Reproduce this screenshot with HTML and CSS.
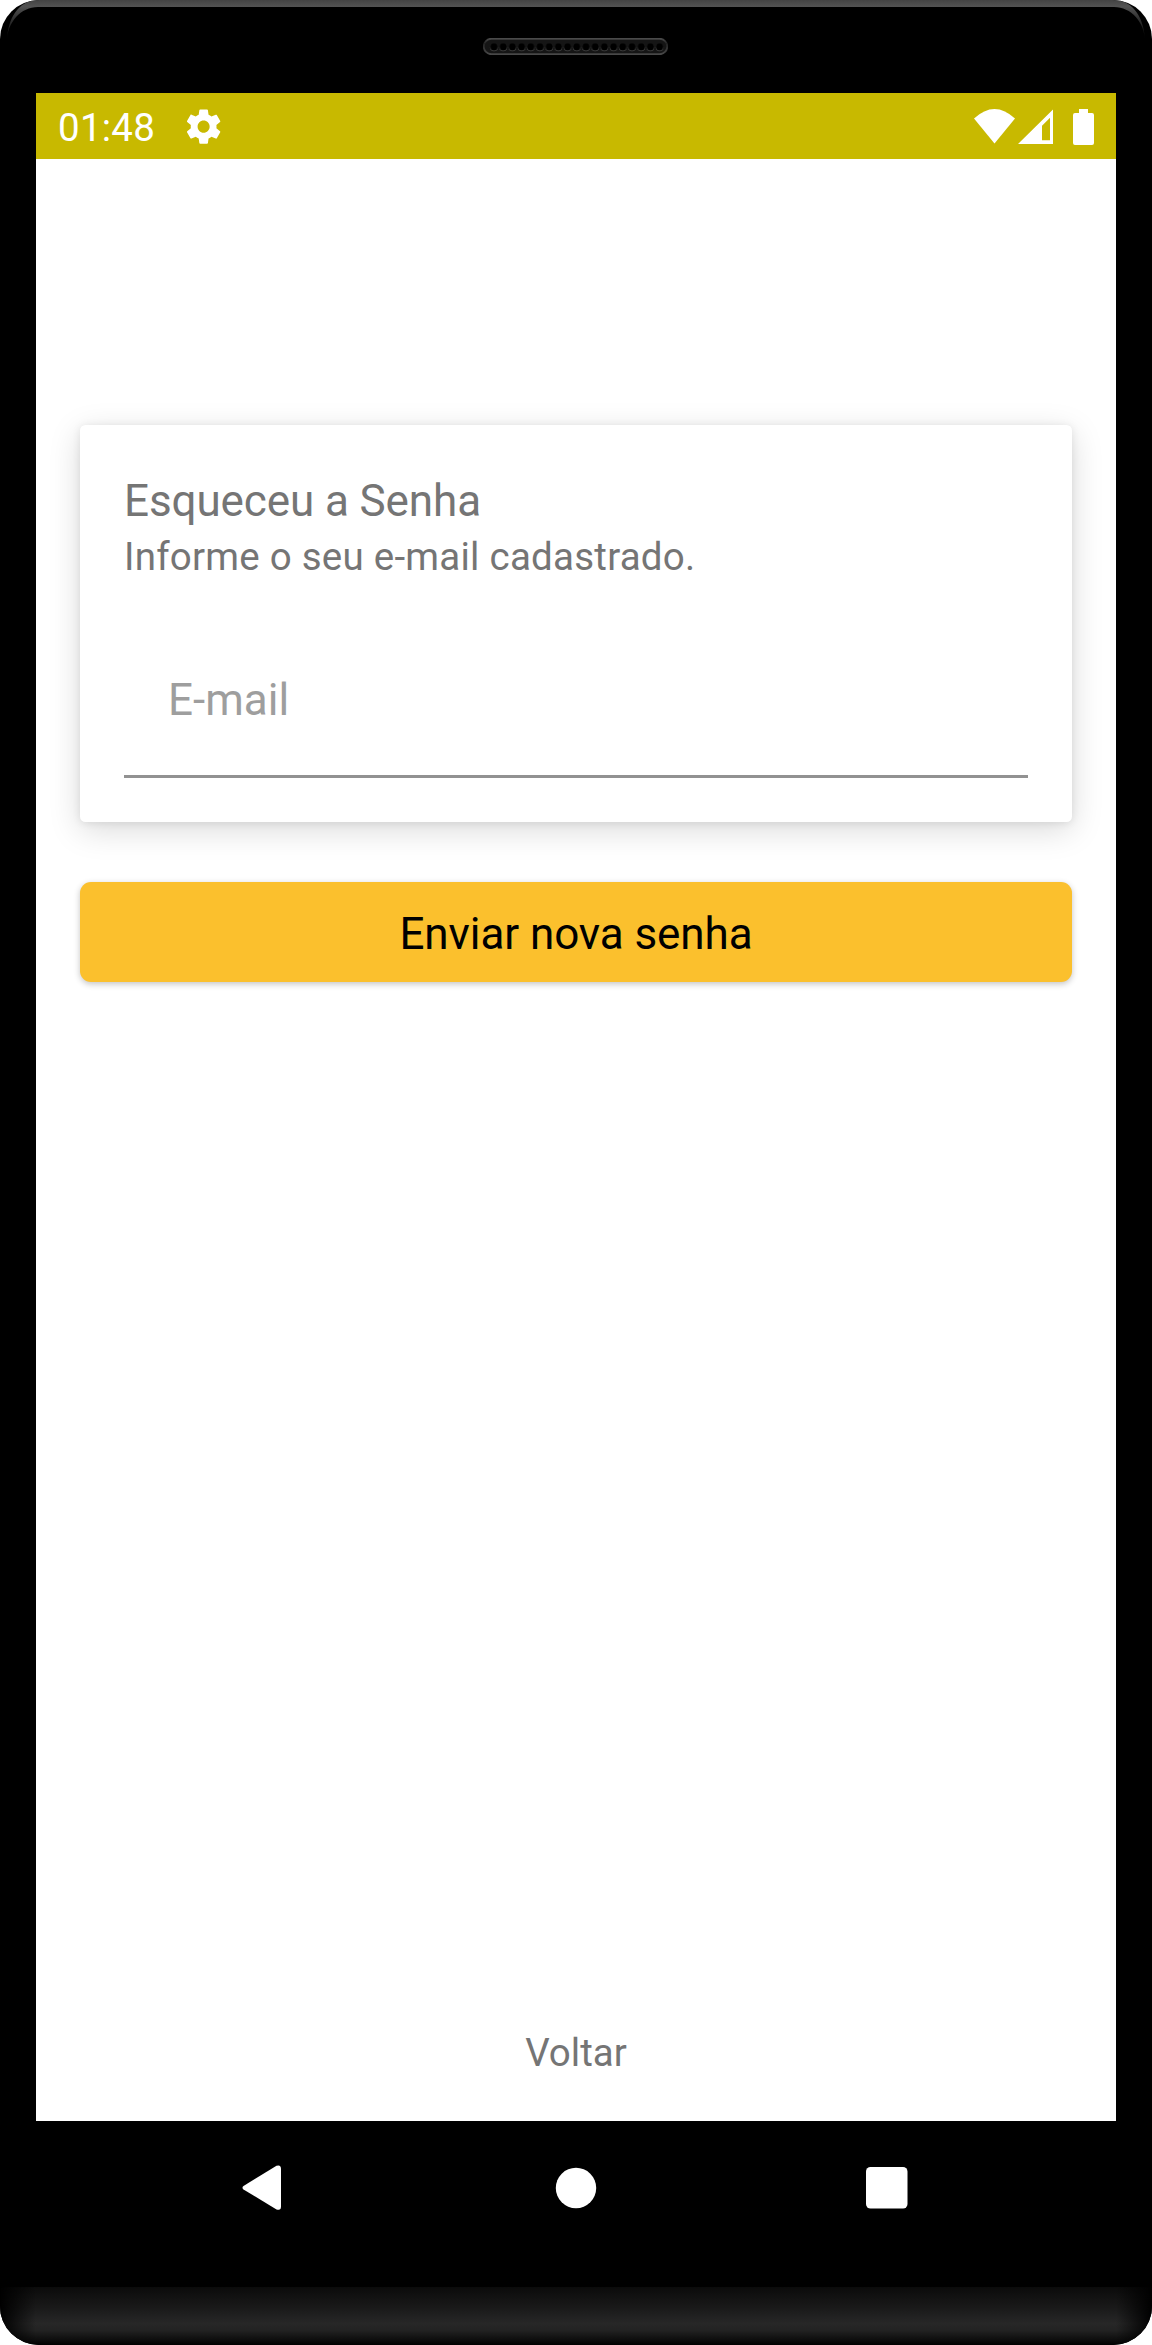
FILE: index.html
```html
<!DOCTYPE html>
<html lang="pt-BR">
<head>
<meta charset="utf-8">
<title>Esqueceu a Senha</title>
<link rel="stylesheet" href="styles.css">
</head>
<body>
<div class="device">
  <div class="bezel-top">
    <svg class="rim" width="1152" height="44" viewBox="0 0 1152 44" aria-hidden="true">
      <defs>
        <linearGradient id="rim" gradientUnits="userSpaceOnUse" x1="0" y1="0" x2="0" y2="42">
          <stop offset="0" stop-color="#434343"/>
          <stop offset=".15" stop-color="#525252"/>
          <stop offset=".45" stop-color="#303030"/>
          <stop offset="1" stop-color="#000"/>
        </linearGradient>
      </defs>
      <path fill="url(#rim)" d="M7 42C7 20 18 0 38 0H1114C1134 0 1145 20 1145 42C1145 22 1131 7 1114 7H38C21 7 7 22 7 42Z"/>
    </svg>
    <svg class="speaker" width="185" height="17" viewBox="0 0 185 17" aria-hidden="true">
      <defs>
        <linearGradient id="spk" x1="0" y1="0" x2="0" y2="1">
          <stop offset="0" stop-color="#4a4a4a"/>
          <stop offset=".3" stop-color="#222"/>
          <stop offset="1" stop-color="#484848"/>
        </linearGradient>
        <pattern id="holes" patternUnits="userSpaceOnUse" x="6.4" y="0" width="9.2" height="17">
          <circle cx="4.6" cy="9.5" r="3.8" fill="#484848"/>
          <circle cx="4.6" cy="8.8" r="3.6" fill="#000"/>
        </pattern>
      </defs>
      <rect x=".75" y=".75" width="183.5" height="15.5" rx="7.75" fill="#151515" stroke="url(#spk)" stroke-width="1.8"/>
      <rect x="6.4" y="0" width="174.8" height="17" fill="url(#holes)"/>
    </svg>
  </div>
  <main class="screen">
    <header class="status">
      <span class="clock">01:48</span>
      <svg class="gear" width="41.25" height="41.25" viewBox="0 0 24 24" fill="#fff"><path d="M19.43 12.98c.04-.32.07-.64.07-.98s-.03-.66-.07-.98l2.11-1.65c.19-.15.24-.42.12-.64l-2-3.46c-.12-.22-.39-.3-.61-.22l-2.49 1c-.52-.4-1.08-.73-1.69-.98l-.38-2.65C14.46 2.18 14.25 2 14 2h-4c-.25 0-.46.18-.49.42l-.38 2.65c-.61.25-1.17.59-1.69.98l-2.49-1c-.23-.09-.49 0-.61.22l-2 3.46c-.13.22-.07.49.12.64l2.11 1.65c-.04.32-.07.65-.07.98s.03.66.07.98l-2.11 1.65c-.19.15-.24.42-.12.64l2 3.46c.12.22.39.3.61.22l2.49-1c.52.4 1.08.73 1.69.98l.38 2.65c.03.24.24.42.49.42h4c.25 0 .46-.18.49-.42l.38-2.65c.61-.25 1.17-.59 1.69-.98l2.49 1c.23.09.49 0 .61-.22l2-3.46c.12-.22.07-.49-.12-.64l-2.11-1.65zM12 15.500c-1.930 0-3.500-1.570-3.500-3.500s1.570-3.500 3.500-3.500 3.500 1.570 3.500 3.500-1.570 3.500-3.500 3.500z"/></svg>
      <svg class="wifi" width="41" height="36" viewBox="0 0 41 36" fill="#fff"><path d="M0 9.500Q20.500-9.500 41 9.500L20.500 34.500Z"/></svg>
      <svg class="signal" width="35" height="36" viewBox="0 0 35 36" fill="#fff"><path fill-rule="evenodd" d="M35 .5V35H0ZM32 8.700L24 16.700V31.300H32Z"/></svg>
      <svg class="battery" width="21" height="36" viewBox="0 0 21 36" fill="#fff"><path d="M6 0H15V4H19Q21 4 21 6V34Q21 36 19 36H2Q0 36 0 34V6Q0 4 2 4H6Z"/></svg>
    </header>
    <section class="card">
      <h1 class="title">Esqueceu a Senha</h1>
      <p class="hint">Informe o seu e-mail cadastrado.</p>
      <input class="field" type="email" placeholder="E-mail" aria-label="E-mail">
    </section>
    <button class="submit" type="button">Enviar nova senha</button>
    <a class="back">Voltar</a>
  </main>
  <nav class="navbar">
    <svg width="40" height="46" viewBox="0 0 40 46" fill="#fff"><path d="M1.500 21L34.500 .8Q39 -.8 39 4V41.500Q39 46 34.500 44.400L1.500 24.500Q-.5 22.700 1.500 21Z"/></svg>
    <svg class="home" width="42" height="42" viewBox="0 0 42 42" fill="#fff"><circle cx="21" cy="21" r="20.200"/></svg>
    <svg width="42" height="42" viewBox="0 0 42 42" fill="#fff"><rect width="41.500" height="41.500" rx="4.500"/></svg>
  </nav>
  <div class="chin"></div>
</div>
</body>
</html>
```
FILE: styles.css
```css
* { box-sizing: border-box; }
body { margin: 0; background: #fff; font-family: Roboto, sans-serif; }
.device {
  width: 1152px;
  height: 2345px;
  display: flex;
  flex-direction: column;
  background: #000;
  border-radius: 39px;
  overflow: hidden;
}
.bezel-top {
  position: relative;
  height: 93px;
  flex: none;
  display: flex;
  justify-content: center;
  padding: 38px 1px 0 0;
}
.rim { position: absolute; top: 0; left: 0; }
.speaker { display: block; }
.screen {
  width: 1080px;
  height: 2028px;
  flex: none;
  margin: 0 36px;
  background: #fff;
  display: flex;
  flex-direction: column;
}
.status {
  height: 66px;
  flex: none;
  background: #c8b900;
  display: flex;
  align-items: center;
  padding: 1px 22px 0;
}
.clock { color: #fff; font-size: 38.5px; line-height: 46px; padding-top: 2px; letter-spacing: .25px; }
.gear { margin-left: 28px; }
.wifi { margin-left: auto; }
.signal { margin-left: 3px; }
.battery { margin-left: 20px; }
.card {
  margin: 266px 44px 0;
  height: 397px;
  padding: 50px 44px 44px;
  background: #fff;
  border-radius: 5.5px;
  box-shadow: 0 8px 32px rgba(0, 0, 0, .15), 0 1px 9px rgba(0, 0, 0, .09);
  display: flex;
  flex-direction: column;
}
.title, .hint { margin: 0; font-weight: 400; color: #757575; }
.title { font-size: 44px; line-height: 52px; letter-spacing: -.1px; }
.hint { font-size: 38.5px; line-height: 46px; margin-top: 7px; letter-spacing: .24px; }
.field {
  margin-top: auto;
  height: 154px;
  width: 100%;
  padding: 0 44px;
  border: 0;
  border-bottom: 3px solid #929292;
  background: transparent;
  font: 400 44px/52px Roboto, sans-serif;
  outline: 0;
}
.field::placeholder { color: #9e9e9e; opacity: 1; }
.submit {
  margin: 60px 44px 0;
  height: 100px;
  flex: none;
  padding: 3px 0 0;
  border: 0;
  border-radius: 11px;
  background: #fbc02d;
  color: #000;
  font: 400 44px/52px Roboto, sans-serif;
  letter-spacing: -.08px;
  box-shadow: 0 2px 6px rgba(0, 0, 0, .24);
}
.back {
  margin: auto auto 45px;
  color: #757575;
  font-size: 38.5px;
  line-height: 46px;
}
.navbar {
  height: 132px;
  flex: none;
  display: flex;
  align-items: center;
  justify-content: space-between;
  padding: 1px 244px 0 242px;
}
.home { margin-left: 4px; }
.chin {
  margin-top: auto;
  height: 58px;
  background:
    linear-gradient(90deg, #000, transparent 36px calc(100% - 36px), #000),
    linear-gradient(#0b0b0b, #191919 35%, #272727 63%, #222 75%, #0c0c0c 92%, #000);
}
```
